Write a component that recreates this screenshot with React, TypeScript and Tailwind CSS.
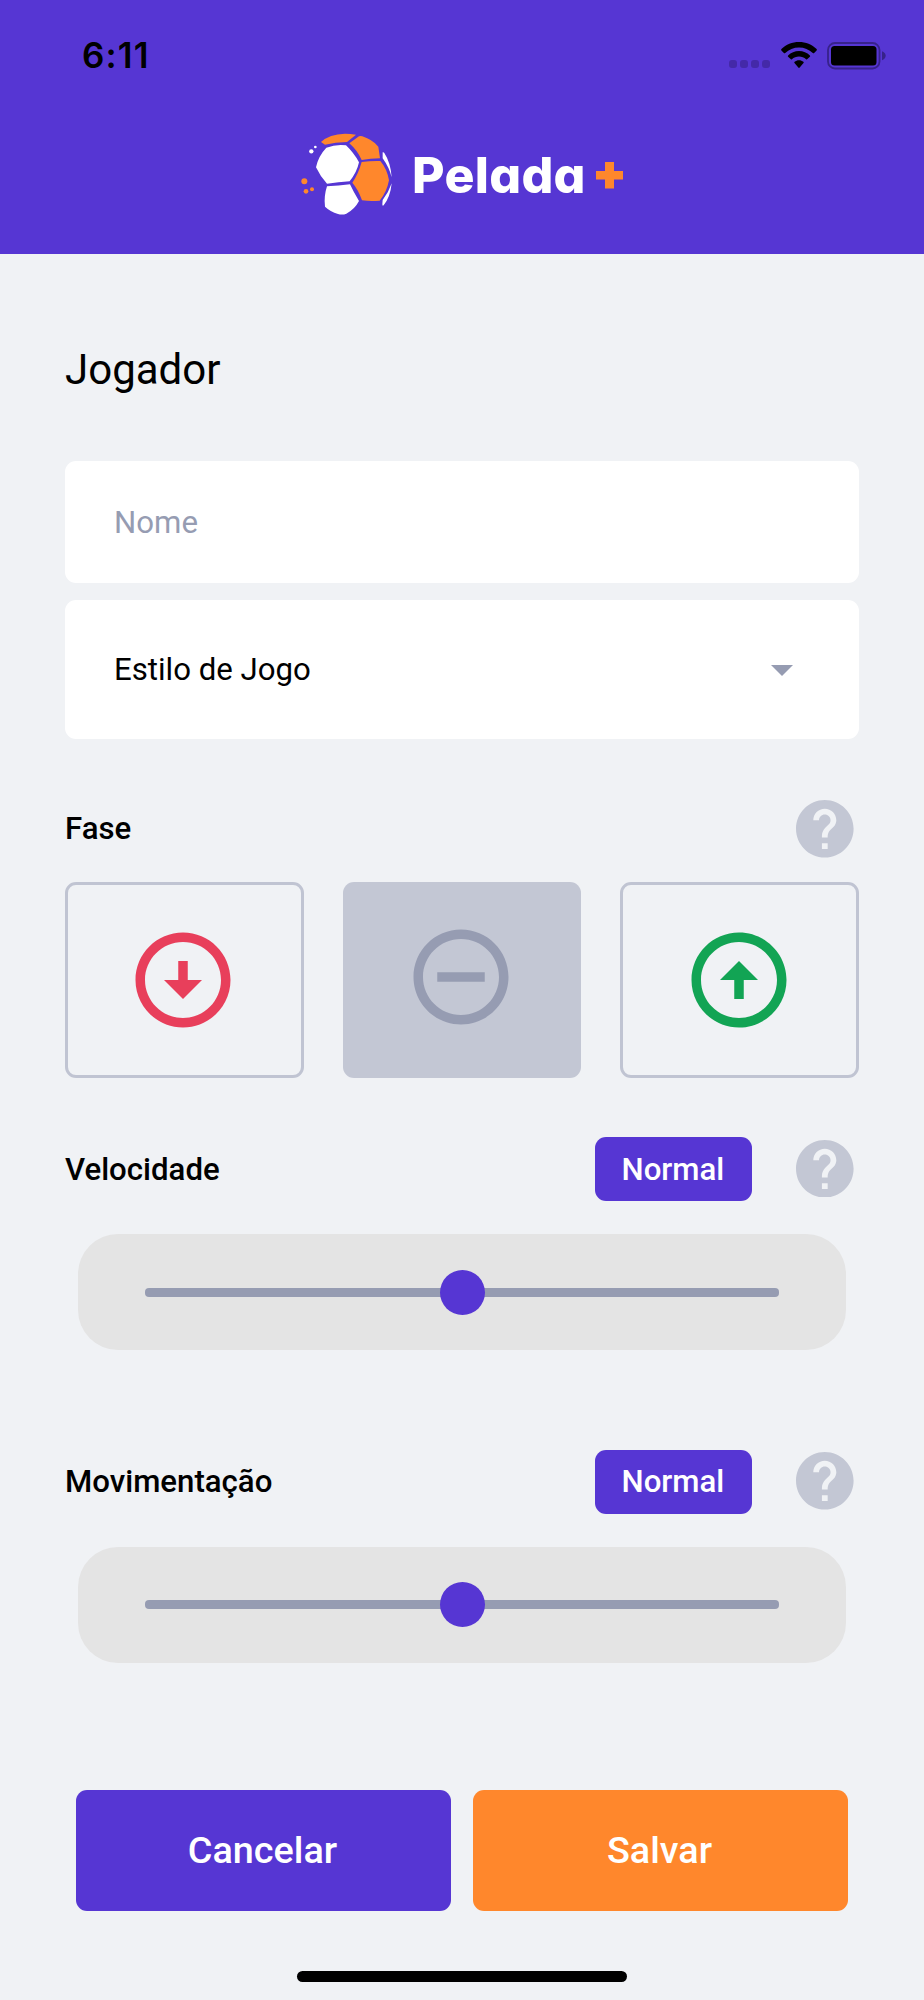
import React from "react";

function StatusBar() {
  return (
    <div className="flex h-[112px] items-start justify-between pl-[82px] pr-[37px] pt-[38px]">
      <span className="mt-[-1px] font-['Inter',sans-serif] text-[35px] font-semibold leading-[36px] tracking-[1.1px] text-black">
        6:11
      </span>
      <div className="flex h-[36px] items-center">
        <div className="mt-[16px] mr-[11px] flex gap-[2.6px]">
          {[0, 1, 2, 3].map((i) => (
            <span key={i} className="h-[8.4px] w-[8.4px] rounded-[3px] bg-[#4429a8]" />
          ))}
        </div>
        <svg viewBox="0 0 36 27" className="mr-[10px] mt-[-1px] h-[27px] w-[36px]" fill="#000">
          <path d="M18 0C11.200 0 5 2.600 .4 7.100c-.4.400-.4.900 0 1.300l2.500 2.500c.4.400.9.400 1.300 0C7.900 7.400 12.700 5.400 18 5.400s10.100 2 13.800 5.500c.4.400.9.400 1.300 0l2.500-2.500c.4-.4.400-.9 0-1.300C31 2.600 24.800 0 18 0Z" />
          <path d="M18 9.100c-4.200 0-8 1.600-10.900 4.300-.4.400-.4.900 0 1.300l2.500 2.400c.4.400.9.400 1.300.1 1.900-1.700 4.400-2.700 7.100-2.700s5.200 1 7.100 2.700c.4.300.9.300 1.300-.1l2.500-2.400c.4-.4.400-.9 0-1.300C26 10.700 22.200 9.100 18 9.100Z" />
          <path d="M18 18.200c-1.700 0-3.200.6-4.400 1.500-.5.400-.5.900-.1 1.300l3.800 4.500c.4.500 1 .5 1.400 0l3.800-4.500c.4-.4.400-.9-.1-1.300-1.200-.9-2.700-1.500-4.400-1.500Z" />
        </svg>
        <svg viewBox="0 0 60 28" className="mt-[-1px] h-[28px] w-[60px]">
          <rect x="1" y="1" width="51.500" height="25.500" rx="7" fill="none" stroke="#37228a" strokeWidth="1.800" />
          <rect x="4" y="4" width="45.500" height="19.500" rx="3.500" fill="#000" />
          <path d="M55 9.300c2 .8 3.700 2.500 3.700 4.500s-1.700 3.700-3.700 4.500Z" fill="#37228a" />
        </svg>
      </div>
    </div>
  );
}

function Logo() {
  return (
    <div className="flex items-start pl-[300px]">
      <svg viewBox="30 30 285 270" className="mt-[18px] h-[90px] w-[95px]">
        <g fill="#ff872c">
          <path d="M93 66Q118 42 165 41Q182 41 198 44L171 66Q136 66 105 74Z" />
          <path d="M178 70L207 49Q212 47 217 49Q248 59 265 80L270 115Q242 115 215 120Q202 91 178 70Z" />
          <path d="M215 126Q243 122 271 123Q291 146 297 181Q290 218 269 242Q242 245 216 241Q205 209 187 188Q205 162 215 126Z" />
          <circle cx="43" cy="184" r="9" />
          <circle cx="48" cy="214" r="7" />
          <circle cx="66" cy="208" r="6" />
        </g>
        <g fill="#fff">
          <path d="M109 83Q138 72 168 76Q192 99 207 127Q201 156 179 184Q145 186 111 191Q91 170 78 142Q85 108 109 83Z" />
          <path d="M111 199Q146 197 180 193Q191 217 207 243Q194 268 169 281Q157 286 144 282Q121 275 105 260Q101 229 111 199Z" />
          <path d="M278 97Q281 96 283 99Q302 128 305 172Q298 143 278 115Z" />
          <path d="M305 190Q301 231 281 256Q277 259 277 253L278 240Q296 217 305 190Z" />
          <circle cx="64" cy="94" r="6.500" />
          <circle cx="76" cy="81" r="4" />
        </g>
      </svg>
      <span className="ml-[17px] mt-[35px] w-[184px] font-['Inter',sans-serif] text-[50px] font-extrabold leading-[56px] tracking-[0.3px] text-white [font-feature-settings:'cv11']">
        Pelada
      </span>
      <svg viewBox="0 0 27 27" className="mt-[50px] h-[27px] w-[27px]" fill="#ff872c">
        <path d="M9 0h9v9h9v8.500h-9V26.500H9v-9H0V9h9Z" />
      </svg>
    </div>
  );
}

function Help() {
  return (
    <svg viewBox="2 2 20 20" className="mr-[5.5px] h-[57.6px] w-[57.6px]" fill="#c3c7d4">
      <path d="M12 2C6.480 2 2 6.480 2 12s4.480 10 10 10 10-4.480 10-10S17.520 2 12 2zm1 17h-2v-2h2v2zm2.070-7.750l-.9.920C13.450 12.900 13 13.500 13 15h-2v-.5c0-1.100.45-2.100 1.170-2.830l1.240-1.260c.37-.36.59-.86.59-1.410 0-1.100-.9-2-2-2s-2 .9-2 2H8c0-2.210 1.790-4 4-4s4 1.790 4 4c0 .88-.36 1.680-.93 2.250z" />
    </svg>
  );
}

const RING =
  "M12 4c4.410 0 8 3.590 8 8s-3.590 8-8 8-8-3.590-8-8 3.590-8 8-8m0-2C6.480 2 2 6.480 2 12s4.480 10 10 10 10-4.480 10-10S17.520 2 12 2z";

function PhaseIcon({ d, className }: { d: string; className: string }) {
  return (
    <svg viewBox="0 0 24 24" className={className} fill="currentColor">
      <path d={RING} />
      <path d={d} />
    </svg>
  );
}

function Slider({ label }: { label: string }) {
  return (
    <section>
      <div className="flex h-[64px] items-center">
        <h2 className="flex-1 pt-px text-[31.2px] font-medium leading-[36px]">{label}</h2>
        <span className="mr-[43.5px] flex h-[64px] w-[157px] items-center justify-center rounded-[11px] bg-[#5636d3] pr-[2px] pt-[2px] text-[31.2px] font-medium text-white">
          Normal
        </span>
        <div className="pb-px">
          <Help />
        </div>
      </div>
      <div className="mx-[13px] mt-[33px] flex h-[116px] items-center rounded-[40px] bg-[#e4e4e4] px-[67px]">
        <div className="flex h-[9px] w-full items-center justify-center rounded-[4px] bg-[#969cb2]">
          <div className="h-[45px] w-[45px] shrink-0 rounded-full bg-[#5636d3]" />
        </div>
      </div>
    </section>
  );
}

export default function App() {
  return (
    <div className="flex h-[2000px] w-[924px] flex-col bg-[#f0f2f5] font-['Roboto',sans-serif] text-black">
      <header className="h-[254px] shrink-0 bg-[#5636d3]">
        <StatusBar />
        <Logo />
      </header>

      <main className="flex flex-col px-[65px]">
        <h1 className="mt-[91px] text-[42px] leading-[50px]">Jogador</h1>

        <div className="mt-[66px] flex h-[122px] items-center rounded-[11px] bg-white px-[49px] pt-[3px] text-[31.2px] text-[#969cb2]">
          Nome
        </div>
        <div className="mt-[17px] flex h-[139px] items-center justify-between rounded-[11px] bg-white pl-[49px] pr-[66px] text-[31.2px]">
          <span className="pt-[2px]">Estilo de Jogo</span>
          <svg viewBox="0 0 22 11" className="mt-[2px] h-[11px] w-[22px]" fill="#969cb2">
            <path d="M0 0h22L11 11Z" />
          </svg>
        </div>

        <div className="mt-[61px] flex h-[58px] items-center justify-between">
          <h2 className="text-[31.2px] font-medium leading-[36px]">Fase</h2>
          <Help />
        </div>
        <div className="mt-[24px] grid h-[196px] grid-cols-3 gap-[39px]">
          <div className="flex items-center justify-center rounded-[11px] border-[3px] border-[#c0c4d2] pr-[2px]">
            <PhaseIcon className="h-[114px] w-[114px] text-[#e83f5b]" d="M13 12V8h-2v4H8l4 4 4-4z" />
          </div>
          <div className="flex items-center justify-center rounded-[11px] bg-[#c3c7d4] pb-[7px] pr-[2px]">
            <PhaseIcon className="h-[114px] w-[114px] text-[#969cb2]" d="M7 11h10v2H7z" />
          </div>
          <div className="flex items-center justify-center rounded-[11px] border-[3px] border-[#c0c4d2] pr-[2px]">
            <PhaseIcon className="h-[114px] w-[114px] text-[#12a454]" d="M11 12v4h2v-4h3l-4-4-4 4z" />
          </div>
        </div>

        <div className="mt-[59px] flex flex-col gap-[99.5px]">
          <Slider label="Velocidade" />
          <Slider label="Movimentação" />
        </div>

        <div className="mt-[127.5px] grid grid-cols-2 gap-[22px] px-[11px] text-[37.8px] font-medium text-white">
          <button className="h-[121px] rounded-[11px] bg-[#5636d3] pr-[2px]">Cancelar</button>
          <button className="h-[121px] rounded-[11px] bg-[#ff872c] pr-[2px]">Salvar</button>
        </div>
      </main>

      <div className="mx-auto mt-[60px] h-[11px] w-[330px] shrink-0 rounded-full bg-black" />
    </div>
  );
}
